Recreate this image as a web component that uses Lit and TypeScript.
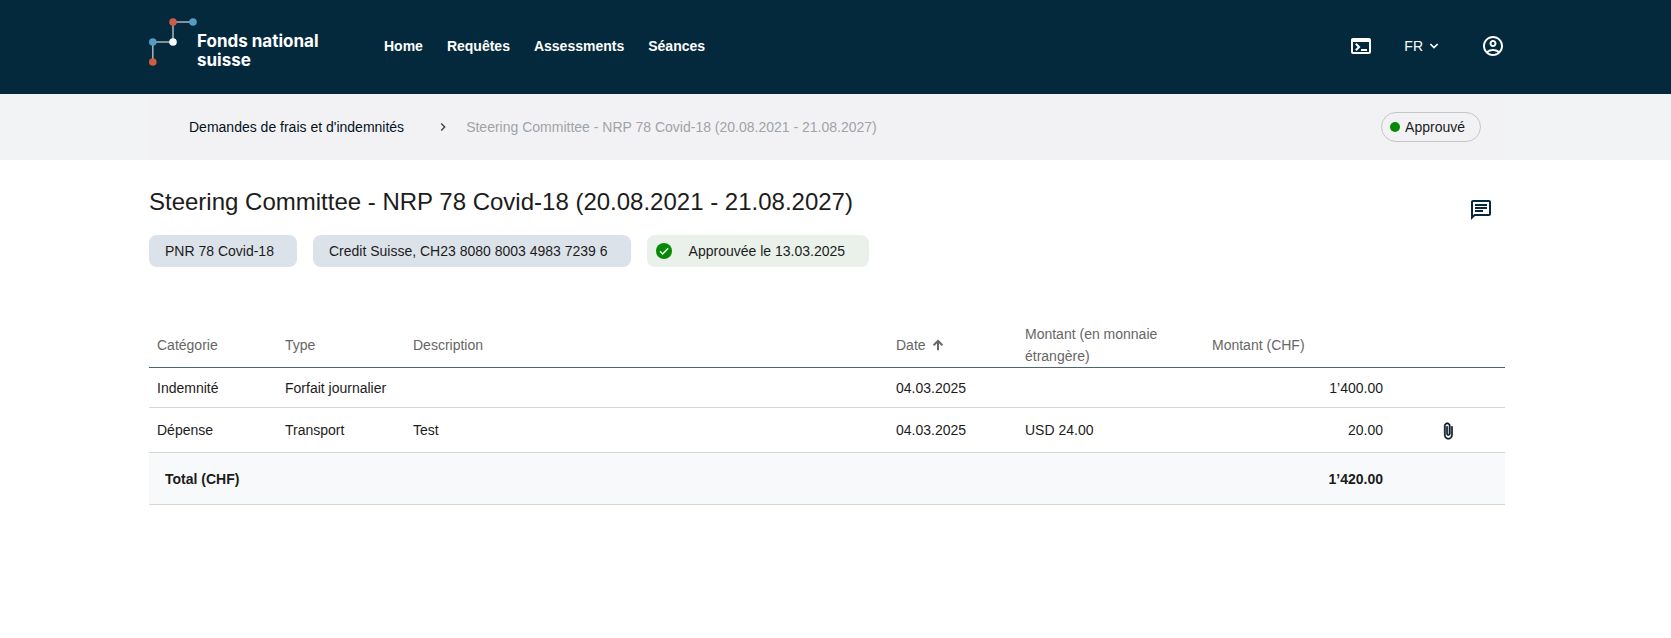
import { LitElement, html, css, svg } from "lit";
import { customElement, property } from "lit/decorators.js";

const icons = {
  terminal: svg`<path d="M20 4H4c-1.11 0-2 .9-2 2v12c0 1.1.89 2 2 2h16c1.1 0 2-.9 2-2V6c0-1.1-.89-2-2-2zm0 14H4V8h16v10zm-2-1h-6v-2h6v2zM7.5 17l-1.41-1.41L8.67 13l-2.59-2.59L7.5 9l4 4-4 4z"/>`,
  account: svg`<path d="M12 2C6.48 2 2 6.48 2 12s4.48 10 10 10 10-4.48 10-10S17.52 2 12 2zM7.35 18.5C8.66 17.56 10.26 17 12 17s3.34.56 4.65 1.5C15.34 19.44 13.74 20 12 20s-3.34-.56-4.65-1.5zm10.79-1.38C16.45 15.8 14.32 15 12 15s-4.45.8-6.14 2.12C4.7 15.73 4 13.95 4 12c0-4.42 3.58-8 8-8s8 3.58 8 8c0 1.95-.7 3.73-1.86 5.12zM12 6c-1.93 0-3.5 1.57-3.5 3.5S10.07 13 12 13s3.5-1.57 3.5-3.5S13.93 6 12 6zm0 5c-.83 0-1.5-.67-1.5-1.5S11.17 8 12 8s1.5.67 1.5 1.5S12.83 11 12 11z"/>`,
  chat: svg`<path d="M4 4h16v12H5.17L4 17.17V4m0-2c-1.1 0-1.99.9-1.99 2L2 22l4-4h14c1.1 0 2-.9 2-2V4c0-1.1-.9-2-2-2H4zm2 10h8v2H6v-2zm0-3h12v2H6V9zm0-3h12v2H6V6z"/>`,
  down: svg`<path d="M6.5 9l5.5 5.500 5.500-5.500" fill="none" stroke="currentColor" stroke-width="2.400"/>`,
  right: svg`<path d="M8.590 16.590 13.170 12 8.590 7.410 10 6l6 6-6 6z"/>`,
  up: svg`<path d="M12 21V5M4.500 12.500 12 5l7.500 7.500" fill="none" stroke="currentColor" stroke-width="3.400"/>`,
  check: svg`<circle cx="12" cy="12" r="12"/><path d="M6 12.500l4 4 8.200-8.500" fill="none" stroke="#fff" stroke-width="2.200"/>`,
  clip: svg`<path d="M16.5 6v11.500c0 2.210-1.790 4-4 4s-4-1.790-4-4V5c0-1.380 1.120-2.500 2.500-2.500s2.500 1.120 2.500 2.500v10.500c0 .550-.450 1-1 1s-1-.450-1-1V6H10v9.500c0 1.380 1.120 2.500 2.500 2.500s2.500-1.120 2.500-2.500V5c0-2.210-1.790-4-4-4S7 2.790 7 5v12.500c0 3.040 2.460 5.500 5.500 5.500s5.500-2.460 5.500-5.500V6h-1.500z" stroke="currentColor" stroke-width=".8"/>`,
};

@customElement("app-icon")
class AppIcon extends LitElement {
  @property() name: keyof typeof icons = "chat";
  static styles = css`
    :host { display: inline-flex; width: 24px; height: 24px; flex: none; }
    svg { width: 100%; height: 100%; fill: currentColor; }
  `;
  render() {
    return html`<svg viewBox="0 0 24 24" aria-hidden="true">${icons[this.name]}</svg>`;
  }
}

@customElement("app-header")
class AppHeader extends LitElement {
  static styles = css`
    :host { display: block; background: #04293c; color: #fff; padding-right: 17px; }
    .inner { max-width: 1356px; height: 94px; margin: 0 auto; display: flex; align-items: flex-start; }
    a { color: inherit; text-decoration: none; }
    .logo { display: flex; width: 235px; padding-top: 16px; }
    .mark { width: 48px; height: 52px; flex: none; }
    .name { padding-top: 16px; font: 700 17px/19px Inter, sans-serif; white-space: nowrap; }
    nav { display: flex; gap: 24px; padding-top: 36px; font-weight: 700; }
    .tools { display: flex; align-items: center; margin-left: auto; padding-top: 34px; }
    button { display: flex; align-items: center; padding: 0; border: 0; background: none; color: inherit; font: inherit; cursor: pointer; }
    .lang { margin: 0 39px 0 31px; gap: 3px; }
    .lang app-icon { width: 16px; height: 16px; }
  `;
  render() {
    return html`<header class="inner">
      <a class="logo" href="#">
        <svg class="mark" viewBox="0 0 48 52" aria-hidden="true">
          <path d="M3.8 46V26H24V6h20" fill="none" stroke="#a9b6bd" stroke-width="1.5" />
          <circle cx="24" cy="6" r="3.8" fill="#cf5c42" />
          <circle cx="44" cy="6" r="3.8" fill="#539cc4" />
          <circle cx="3.8" cy="26" r="3.8" fill="#539cc4" />
          <circle cx="24" cy="26" r="3.8" fill="#fff" />
          <circle cx="3.8" cy="46" r="3.8" fill="#cf5c42" />
        </svg>
        <span class="name">Fonds national<br />suisse</span>
      </a>
      <nav>
        ${["Home", "Requêtes", "Assessments", "Séances"].map((t) => html`<a href="#">${t}</a>`)}
      </nav>
      <div class="tools">
        <button aria-label="Console"><app-icon name="terminal"></app-icon></button>
        <button class="lang">FR <app-icon name="down"></app-icon></button>
        <button aria-label="Profil"><app-icon name="account"></app-icon></button>
      </div>
    </header>`;
  }
}

@customElement("app-breadcrumb")
class AppBreadcrumb extends LitElement {
  static styles = css`
    :host { display: block; background: #f2f3f5; padding-right: 17px; }
    .inner { max-width: 1356px; height: 66px; margin: 0 auto; padding: 0 24px 0 40px; box-sizing: border-box; display: flex; align-items: center; background: #f2f2f5; }
    a { color: #04121c; text-decoration: none; }
    app-icon { width: 16px; height: 16px; margin: 0 15px 0 31px; color: #333f4a; }
    .current { color: #9fa3a8; }
    .status { display: flex; align-items: center; gap: 5px; height: 30px; box-sizing: border-box; margin-left: auto; padding: 0 15px 0 8px; border: 1px solid #c4c5c8; border-radius: 15px; }
    .dot { width: 10px; height: 10px; border-radius: 50%; background: #068a06; }
  `;
  render() {
    return html`<div class="inner">
      <a href="#">Demandes de frais et d'indemnités</a>
      <app-icon name="right"></app-icon>
      <span class="current">Steering Committee - NRP 78 Covid-18 (20.08.2021 - 21.08.2027)</span>
      <span class="status"><span class="dot"></span>Approuvé</span>
    </div>`;
  }
}

const rows = [
  { category: "Indemnité", type: "Forfait journalier", description: "", date: "04.03.2025", foreign: "", amount: "1’400.00", file: false },
  { category: "Dépense", type: "Transport", description: "Test", date: "04.03.2025", foreign: "USD 24.00", amount: "20.00", file: true },
];

@customElement("expense-table")
class ExpenseTable extends LitElement {
  static styles = css`
    :host { display: block; }
    table { width: 100%; table-layout: fixed; border-collapse: separate; border-spacing: 0; }
    th, td { padding: 0 8px; text-align: left; font-weight: 400; border-bottom: 1px solid #d6d8d4; }
    thead th { height: 44px; border-color: #4b6670; color: #666; line-height: 22px; }
    .c-short { width: 112px; }
    .c-date { width: 113px; }
    .c-foreign { width: 171px; }
    .c-amount { width: 171px; }
    .c-file { width: 98px; }
    tbody td { height: 39px; }
    tbody .tall td { height: 44px; }
    tfoot th, tfoot td { height: 51px; font-weight: 700; background: #f8f9fb; }
    tfoot th { padding-left: 16px; }
    button { display: inline-flex; align-items: center; padding: 0; border: 0; background: none; color: inherit; font: inherit; cursor: pointer; }
    .sort { gap: 5px; }
    .sort app-icon { width: 14px; height: 14px; }
    .num { text-align: right; }
    .file { text-align: center; color: #04121c; }
    .file button { vertical-align: middle; }
    .file app-icon { width: 18px; height: 18px; }
  `;
  render() {
    return html`<table>
      <thead>
        <tr>
          <th class="c-short">Catégorie</th>
          <th class="c-short">Type</th>
          <th>Description</th>
          <th class="c-date" aria-sort="ascending"><button class="sort">Date <app-icon name="up"></app-icon></button></th>
          <th class="c-foreign">Montant (en monnaie étrangère)</th>
          <th class="c-amount">Montant (CHF)</th>
          <th class="c-file"></th>
        </tr>
      </thead>
      <tbody>
        ${rows.map((r) => html`<tr class=${r.file ? "tall" : ""}>
          <td>${r.category}</td>
          <td>${r.type}</td>
          <td>${r.description}</td>
          <td>${r.date}</td>
          <td>${r.foreign}</td>
          <td class="num">${r.amount}</td>
          <td class="file">${r.file ? html`<button aria-label="Pièce jointe"><app-icon name="clip"></app-icon></button>` : ""}</td>
        </tr>`)}
      </tbody>
      <tfoot>
        <tr>
          <th colspan="5">Total (CHF)</th>
          <td class="num">1’420.00</td>
          <td></td>
        </tr>
      </tfoot>
    </table>`;
  }
}

@customElement("app-root")
class AppRoot extends LitElement {
  static styles = css`
    :host { display: block; min-height: 100vh; background: #fff; color: #1c1c1c; font: 14px/20px "Liberation Sans", Arial, sans-serif; }
    .page { padding: 0 17px 40px 0; }
    .inner { max-width: 1356px; margin: 0 auto; }
    .head { display: flex; justify-content: space-between; align-items: flex-start; padding-top: 26px; margin-bottom: 56px; }
    h1 { margin: 0 0 17px; font-size: 24px; line-height: 32px; font-weight: 400; }
    .tags { display: flex; gap: 16px; }
    .tag { display: flex; align-items: center; height: 32px; padding: 0 23px 0 16px; border-radius: 8px; background: #dce2ea; }
    .ok { gap: 17px; padding: 0 24px 0 9px; background: #eaf1ea; }
    .ok app-icon { width: 16px; height: 16px; color: #068a06; }
    .comments { display: flex; padding: 12px; border: 0; background: none; color: #04293c; cursor: pointer; }
  `;
  render() {
    return html`
      <app-header></app-header>
      <app-breadcrumb></app-breadcrumb>
      <main class="page">
        <div class="inner">
          <div class="head">
            <div>
              <h1>Steering Committee - NRP 78 Covid-18 (20.08.2021 - 21.08.2027)</h1>
              <div class="tags">
                <span class="tag">PNR 78 Covid-18</span>
                <span class="tag">Credit Suisse, CH23 8080 8003 4983 7239 6</span>
                <span class="tag ok"><app-icon name="check"></app-icon>Approuvée le 13.03.2025</span>
              </div>
            </div>
            <button class="comments" aria-label="Commentaires"><app-icon name="chat"></app-icon></button>
          </div>
          <expense-table></expense-table>
        </div>
      </main>
    `;
  }
}
